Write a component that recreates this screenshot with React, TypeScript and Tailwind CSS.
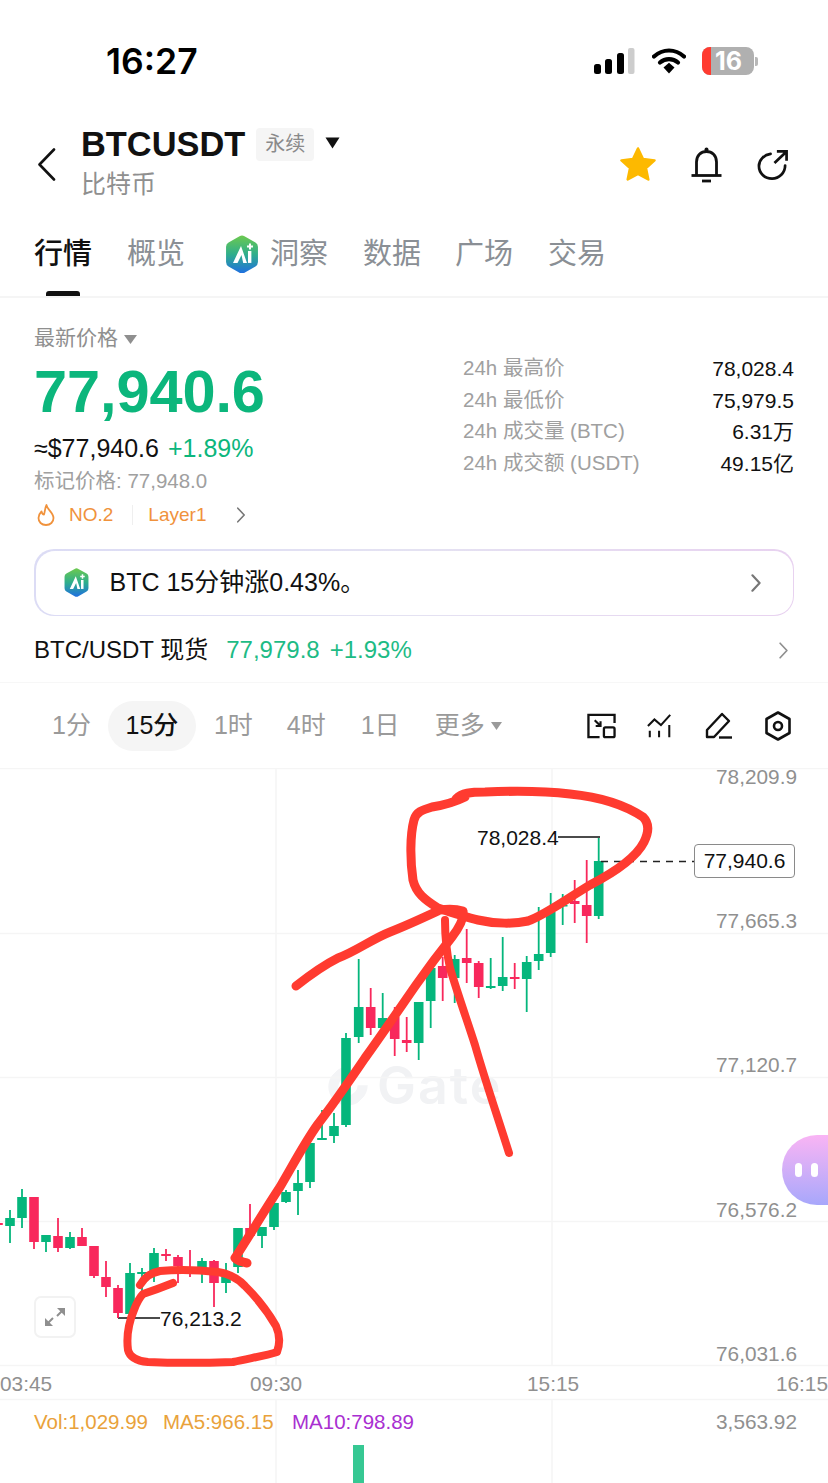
const SANS = "font-['Liberation_Sans','Noto_Sans_CJK_SC',sans-serif]";

// x, wickTop, wickBottom, bodyTop, bodyBottom, green?
const candles: [number, number, number, number, number, 0 | 1][] = [
  [-2, 1222, 1226, 1223, 1225, 0],
  [10, 1210, 1243, 1218, 1226, 1],
  [22, 1189, 1228, 1197, 1218, 1],
  [34, 1197, 1249, 1197, 1242, 0],
  [46, 1235, 1252, 1235, 1242, 1],
  [58, 1218, 1252, 1236, 1248, 0],
  [70, 1232, 1249, 1237, 1248, 1],
  [82, 1228, 1246, 1237, 1246, 0],
  [94, 1246, 1278, 1246, 1276, 0],
  [106, 1261, 1297, 1277, 1287, 0],
  [118, 1285, 1318, 1288, 1313, 0],
  [130, 1263, 1314, 1273, 1314, 1],
  [142, 1268, 1295, 1272, 1274, 1],
  [154, 1248, 1282, 1253, 1271, 1],
  [166, 1249, 1261, 1254, 1256, 0],
  [178, 1255, 1283, 1257, 1266, 0],
  [190, 1250, 1277, 1267, 1270, 0],
  [202, 1258, 1283, 1261, 1269, 1],
  [214, 1260, 1307, 1261, 1283, 0],
  [226, 1263, 1293, 1277, 1283, 1],
  [238, 1228, 1273, 1228, 1267, 1],
  [250, 1204, 1237, 1228, 1236, 0],
  [262, 1227, 1248, 1227, 1236, 1],
  [274, 1202, 1230, 1203, 1227, 1],
  [286, 1190, 1203, 1192, 1202, 1],
  [298, 1170, 1215, 1183, 1191, 1],
  [310, 1143, 1188, 1143, 1182, 1],
  [322, 1110, 1140, 1138, 1140, 1],
  [334, 1113, 1143, 1126, 1136, 1],
  [346, 1033, 1127, 1038, 1125, 1],
  [358.7, 959, 1043, 1007, 1037, 1],
  [370.7, 988, 1035, 1007, 1028, 0],
  [382.7, 993, 1030, 1018, 1028, 1],
  [394.7, 1007, 1056, 1017, 1039, 0],
  [406.7, 1017, 1052, 1040, 1043, 0],
  [418.7, 1002, 1060, 1002, 1043, 1],
  [430.7, 967, 1028, 968, 1001, 1],
  [442.7, 957, 1001, 966, 978, 0],
  [454.7, 955, 1003, 959, 978, 1],
  [466.7, 929, 983, 958, 963, 0],
  [478.7, 961, 998, 963, 987, 0],
  [490.7, 958, 989, 986, 988, 1],
  [502.7, 937, 991, 977, 986, 1],
  [514.7, 963, 989, 977, 979, 0],
  [526.7, 956, 1012, 962, 979, 1],
  [538.7, 907, 970, 954, 961, 1],
  [550.7, 893, 957, 912, 953, 1],
  [562.7, 894, 925, 905, 906, 1],
  [574.7, 880, 923, 901, 904, 0],
  [586.7, 860, 943, 905, 916, 0],
  [598.7, 838, 919, 861, 916, 1],
];

function AiLogo({ size, id }: { size: number; id: string }) {
  return (
    <svg width={size} height={size * 1.08} viewBox="0 0 36 39" className="shrink-0">
      <defs>
        <linearGradient id={id} x1="0" y1="0" x2="0" y2="1">
          <stop offset="0" stopColor="#6cc94f" />
          <stop offset="0.5" stopColor="#2fae8c" />
          <stop offset="1" stopColor="#1f6fe0" />
        </linearGradient>
      </defs>
      <path
        d="M15.5 1.2 a5 5 0 0 1 5 0 L31.5 7.5 a5 5 0 0 1 2.5 4.3 V27.2 a5 5 0 0 1 -2.5 4.3 L20.5 37.8 a5 5 0 0 1 -5 0 L4.5 31.5 a5 5 0 0 1 -2.5 -4.3 V11.8 a5 5 0 0 1 2.5 -4.3 Z"
        fill={`url(#${id})`}
      />
      <path d="M17 11 L9 28 H13.5 L17.5 20 L19.2 28 H23 Z" fill="#fff" />
      <rect x="24" y="16" width="3.4" height="12" fill="#fff" />
      <path d="M26 8.5 v6 M23 11.5 h6" stroke="#fff" strokeWidth="2" />
    </svg>
  );
}

function Chevron({ className, color = "#8f8f8f", w = 2 }: { className: string; color?: string; w?: number }) {
  return (
    <svg viewBox="0 0 12 20" className={className} fill="none">
      <path d="M2 1.5 L10 10 L2 18.5" stroke={color} strokeWidth={w} strokeLinecap="round" strokeLinejoin="round" />
    </svg>
  );
}

function StatusBar() {
  return (
    <div className="h-[125px] flex items-start pt-[40px] pl-[106px] pr-[70px] justify-between">
      <span className="text-[35.5px] leading-[44px] font-semibold text-black font-['Inter',sans-serif]">16:27</span>
      <div className="flex items-center gap-[18px] pt-[7px]">
        <svg width="41" height="26" viewBox="0 0 41 26">
          <rect x="0" y="16" width="7" height="10" rx="2.5" fill="#000" />
          <rect x="11" y="11" width="7" height="15" rx="2.5" fill="#000" />
          <rect x="23" y="5" width="7" height="21" rx="2.5" fill="#000" />
          <rect x="34" y="0" width="6.5" height="26" rx="2" fill="#cdcdcd" />
        </svg>
        <svg width="34" height="26" viewBox="0 0 34 26" className="-ml-[1px]">
          <path d="M2 8.5 C11 0.5 23 0.5 32 8.5" stroke="#000" strokeWidth="4.2" fill="none" strokeLinecap="round" />
          <path d="M8 14.5 C13 10 21 10 26 14.5" stroke="#000" strokeWidth="4.2" fill="none" strokeLinecap="round" />
          <path d="M11.5 19.5 L17 14.8 L22.5 19.5 L17 25.5 Z" fill="#000" />
        </svg>
        <div className="flex items-center -ml-[2px]">
          <div className="w-[52px] h-[28px] rounded-[8px] bg-[#b0b0b0] overflow-hidden flex items-center relative">
            <div className="w-[9px] h-full bg-[#ff3b30]" />
            <span className="flex-1 text-center text-white font-bold text-[25px] leading-[28px] font-['Inter',sans-serif] pr-[8px]">16</span>
          </div>
          <div className="w-[3px] h-[9px] bg-[#b8b8b8] rounded-r-[2px] ml-[1px]" />
        </div>
      </div>
    </div>
  );
}

function Header() {
  return (
    <div className="h-[75px] flex items-center pl-[37px] pr-[40px]">
      <svg width="19" height="33" viewBox="0 0 19 33" fill="none" className="shrink-0 mt-[3px]">
        <path d="M17 1.5 L2.5 16.5 L17 31.5" stroke="#111" strokeWidth="2.6" strokeLinecap="round" strokeLinejoin="round" />
      </svg>
      <div className="ml-[25px] flex flex-col">
        <div className="flex items-center h-[38px]">
          <span className={`${SANS} text-[34.4px] leading-[38px] font-bold text-[#111]`}>BTCUSDT</span>
          <span className={`${SANS} ml-[11px] w-[58px] h-[33px] bg-[#f5f5f5] rounded-[4px] flex items-center justify-center text-[20px] text-[#8a8a8a]`}>永续</span>
          <svg width="15" height="12" viewBox="0 0 15 12" className="ml-[11px] -mt-[2px]"><path d="M0.5 0.5 H14.5 L7.5 11.5 Z" fill="#111" /></svg>
        </div>
        <span className={`${SANS} text-[25px] leading-[32px] mt-[5px] text-[#8f8f8f]`}>比特币</span>
      </div>
      <div className="ml-auto flex items-center gap-[35px] mt-[4px] -mr-[1px]">
        <svg width="36" height="35" viewBox="0 0 36 35">
          <path d="M18 1.5 L23 12 L34.5 13.4 L26 21.2 L28.3 32.5 L18 26.9 L7.7 32.5 L10 21.2 L1.5 13.4 L13 12 Z" fill="#fdb900" stroke="#fdb900" strokeWidth="2.5" strokeLinejoin="round" />
        </svg>
        <svg width="31" height="36" viewBox="0 0 31 36" fill="none">
          <path d="M5.5 28 V15 C5.5 8.5 10 4.5 15.5 4.5 C21 4.5 25.5 8.5 25.5 15 V28" stroke="#111" strokeWidth="2.8" />
          <path d="M0.5 28.5 H30.5" stroke="#111" strokeWidth="2.8" />
          <path d="M11 34 H20" stroke="#111" strokeWidth="2.8" />
          <circle cx="15.5" cy="2.5" r="2" fill="#111" />
        </svg>
        <svg width="32" height="32" viewBox="0 0 33 32" fill="none">
          <path d="M14 4.5 C7 5.5 2 11 2 17 C2 24.5 8 30 15.5 30 C23 30 29 24 29 16.5" stroke="#111" strokeWidth="2.8" strokeLinecap="round" />
          <path d="M18 14 L30 2.5 M20.5 2 H30.5 V11.5" stroke="#111" strokeWidth="2.8" />
        </svg>
      </div>
    </div>
  );
}

function Tabs() {
  const t = "text-[29px] leading-[40px] text-[#8a8f95]";
  return (
    <div className={`${SANS} h-[98px] border-b-2 border-[#f5f5f5] pl-[34px] flex flex-col`}>
      <div className="flex items-center h-[40px] mt-[34px]">
        <span className="text-[29px] leading-[40px] text-[#111] font-medium">行情</span>
        <span className={`${t} ml-[35px]`}>概览</span>
        <div className="ml-[39px]"><AiLogo size={36} id="ai1" /></div>
        <span className={`${t} ml-[10px]`}>洞察</span>
        <span className={`${t} ml-[35px]`}>数据</span>
        <span className={`${t} ml-[34px]`}>广场</span>
        <span className={`${t} ml-[35px]`}>交易</span>
      </div>
      <div className="w-[34px] h-[5px] rounded-t-[3px] bg-[#111] ml-[12px] mt-auto" />
    </div>
  );
}

function Stat({ label, value }: { label: string; value: string }) {
  return (
    <div className="flex justify-between items-center h-[31.5px]">
      <span className="text-[20.5px] text-[#a0a0a0]">{label}</span>
      <span className="text-[21px] text-[#111]">{value}</span>
    </div>
  );
}

function PriceBlock() {
  return (
    <div className={`${SANS} h-[240px] px-[34px] flex justify-between`}>
      <div className="flex flex-col">
        <div className="flex items-center h-[30px] mt-[25px] text-[21px] text-[#8f8f8f]">
          最新价格
          <svg width="13" height="9" viewBox="0 0 13 9" className="ml-[6px] mt-[2px]"><path d="M0 0 H13 L6.5 9 Z" fill="#8f8f8f" /></svg>
        </div>
        <div className="text-[59.5px] leading-[66px] font-bold text-[#0cb67c] mt-[6px] tracking-[-0.1px]">77,940.6</div>
        <div className="flex items-center h-[32px] mt-[8px] text-[25px]">
          <span className="text-[#111]">≈$77,940.6</span>
          <span className="text-[#0cb67c] ml-[9px]">+1.89%</span>
        </div>
        <div className="text-[20.5px] leading-[28px] text-[#a0a0a0] mt-[2px]">标记价格: 77,948.0</div>
        <div className="flex items-center h-[30px] mt-[5px] text-[19px] text-[#f0923c]">
          <svg width="18" height="22" viewBox="0 0 18 22" fill="none" className="ml-[3px]">
            <path d="M9.5 1 C10 5.5 16.5 8.5 16.5 14 C16.5 18 13.5 21 9 21 C4.5 21 1.5 18 1.5 14 C1.5 11 3 9 4.5 7.5 C5 9.5 6 10.5 7 10.5 C8 7.5 8 4 9.5 1 Z" stroke="#f0923c" strokeWidth="1.8" strokeLinejoin="round" />
          </svg>
          <span className="ml-[14px]">NO.2</span>
          <span className="w-[1px] h-[20px] bg-[#efefef] ml-[19px] mr-[15px]" />
          <span>Layer1</span>
          <Chevron className="w-[10px] h-[16px] ml-[30px]" color="#777" />
        </div>
      </div>
      <div className="w-[331px] mt-[55px]">
        <Stat label="24h 最高价" value="78,028.4" />
        <Stat label="24h 最低价" value="75,979.5" />
        <Stat label="24h 成交量 (BTC)" value="6.31万" />
        <Stat label="24h 成交额 (USDT)" value="49.15亿" />
      </div>
    </div>
  );
}

function Insight() {
  return (
    <div className="mx-[34px] mt-[11px] h-[67px] rounded-[20px] p-[1.5px] bg-gradient-to-r from-[#dcdcf5] via-[#e4e2f2] to-[#e8d2f0]">
      <div className={`${SANS} h-full rounded-[19px] bg-white flex items-center pl-[27px] pr-[31px]`}>
        <AiLogo size={27} id="ai2" />
        <span className="ml-[20px] text-[25px] text-[#111]">BTC 15分钟涨0.43%。</span>
        <Chevron className="w-[12px] h-[18px] ml-auto" color="#777" w={2.4} />
      </div>
    </div>
  );
}

function SpotRow() {
  return (
    <div className={`${SANS} h-[67px] border-b-[1.5px] border-[#f7f7f7] pl-[34px] pr-[39px] pt-[2px] flex items-center text-[24px]`}>
      <span className="text-[#111]">BTC/USDT 现货</span>
      <span className="text-[#1dbb85] ml-[18px]">77,979.8</span>
      <span className="text-[#1dbb85] ml-[10px]">+1.93%</span>
      <Chevron className="w-[11px] h-[17px] ml-auto" color="#8f8f8f" />
    </div>
  );
}

function Toolbar() {
  const t = "text-[25px] text-[#9a9a9a]";
  return (
    <div className={`${SANS} h-[85px] flex items-center pl-[52px] pr-[37px]`}>
      <span className={t}>1分</span>
      <span className="ml-[17px] w-[88px] h-[50px] rounded-[25px] bg-[#f5f5f5] flex items-center justify-center text-[25px] text-[#111] font-medium">15分</span>
      <span className={`${t} ml-[18px]`}>1时</span>
      <span className={`${t} ml-[34px]`}>4时</span>
      <span className={`${t} ml-[35px]`}>1日</span>
      <span className={`${t} ml-[35px]`}>更多</span>
      <svg width="11" height="8" viewBox="0 0 11 8" className="ml-[6px]"><path d="M0 0 H11 L5.5 8 Z" fill="#9a9a9a" /></svg>
      <div className="ml-auto flex items-center gap-[32px]">
        <svg width="29" height="26" viewBox="0 0 30 26" fill="none" stroke="#111" strokeWidth="2.4" className="-mr-[1px]">
          <path d="M28.5 10 V1.5 H1.5 V24.5 H13" />
          <path d="M8 7 L14 13 M14 8 V13 H9" strokeWidth="2.2" />
          <rect x="17.5" y="14.5" width="11" height="10" rx="1.5" />
        </svg>
        <svg width="26" height="26" viewBox="0 0 28 26" fill="none" stroke="#111" strokeWidth="2.2">
          <path d="M1 13 L8 6 L15 12 L25 1" />
          <path d="M3 18 V25 M13 18 V25 M24 12 V25" />
        </svg>
        <svg width="28" height="27" viewBox="0 0 28 27" fill="none" stroke="#111" strokeWidth="2.4" strokeLinejoin="round">
          <path d="M2 25 V18 L17 2 L24 9 L9 25 Z" />
          <path d="M14 25.5 H27" />
        </svg>
        <svg width="26" height="30" viewBox="0 0 26 30" fill="none" stroke="#111" strokeWidth="2.6" strokeLinejoin="round">
          <path d="M13 1.5 L24.5 8 V22 L13 28.5 L1.5 22 V8 Z" />
          <circle cx="13" cy="15" r="4" />
        </svg>
      </div>
    </div>
  );
}

function Chart() {
  const ax = `${SANS} absolute text-[20.8px] leading-[26px] text-[#909090]`;
  return (
    <div className="relative h-[715px]">
      <div className="absolute left-[328px] top-[296px] flex items-center gap-[9px]">
        <div className="w-[40px] h-[38px] rounded-full border-[10px] border-[#f3f4f6] border-r-transparent -rotate-45" />
        <span className="font-['Inter',sans-serif] font-semibold text-[52px] leading-[44px] tracking-[2px] text-[#f1f2f4]">Gate</span>
      </div>
      <svg className="absolute inset-0" width="828" height="715" viewBox="0 768 828 715">
        <g stroke="#f5f5f5" strokeWidth="1.5">
          {[768.5, 933.5, 1077.5, 1221.5, 1365.5, 1399.5].map((y) => (
            <line key={y} x1="0" x2="828" y1={y} y2={y} />
          ))}
          {[276, 552].map((x) => (
            <g key={x}>
              <line x1={x} x2={x} y1="768" y2="1365" />
              <line x1={x} x2={x} y1="1399" y2="1483" />
            </g>
          ))}
        </g>
        {candles.map(([x, wt, wb, bt, bb, g]) => {
          const c = g ? "#05b67c" : "#f8285c";
          return (
            <g key={x} fill={c}>
              <rect x={x - 0.9} y={wt} width="1.8" height={wb - wt} />
              <rect x={x - 4.8} y={bt} width="9.6" height={Math.max(bb - bt, 1.5)} />
            </g>
          );
        })}
        <rect x="353" y="1445" width="11" height="38" fill="#36c893" />
        <path d="M118 1318 H160 M558 837 H600" stroke="#111" strokeWidth="1.5" fill="none" />
        <path d="M118 1312 V1318" stroke="#f8285c" strokeWidth="1.8" />
        <path d="M601 861.5 H694" stroke="#222" strokeWidth="1.3" strokeDasharray="7 6" fill="none" />
      </svg>

      <span className={`${ax} right-[31px] top-[-4px]`}>78,209.9</span>
      <span className={`${ax} right-[31px] top-[140px]`}>77,665.3</span>
      <span className={`${ax} right-[31px] top-[284px]`}>77,120.7</span>
      <span className={`${ax} right-[31px] top-[429px]`}>76,576.2</span>
      <span className={`${ax} right-[31px] top-[573px]`}>76,031.6</span>

      <span className={`${ax} left-0 top-[603px]`}>03:45</span>
      <span className={`${ax} left-[250px] top-[603px]`}>09:30</span>
      <span className={`${ax} left-[527px] top-[603px]`}>15:15</span>
      <span className={`${ax} right-0 top-[603px]`}>16:15</span>

      <div className={`${SANS} absolute left-[34px] top-[641px] flex text-[20.5px] leading-[26px]`}>
        <span className="text-[#e9a23b] w-[129px]">Vol:1,029.99</span>
        <span className="text-[#e9a23b] w-[129px]">MA5:966.15</span>
        <span className="text-[#a92fd1]">MA10:798.89</span>
      </div>
      <span className={`${ax} right-[31px] top-[641px]`}>3,563.92</span>

      <span className={`${SANS} absolute left-[477px] top-[57px] text-[21px] leading-[26px] text-[#111]`}>78,028.4</span>
      <span className={`${SANS} absolute left-[160px] top-[538px] text-[21px] leading-[26px] text-[#111]`}>76,213.2</span>
      <div className={`${SANS} absolute left-[694px] top-[76px] w-[101px] h-[34px] bg-white border border-[#8a8a8a] rounded-[4px] flex items-center justify-center text-[21px] text-[#111]`}>77,940.6</div>

      <div className="absolute left-[34px] top-[528px] w-[42px] h-[42px] rounded-[7px] border-2 border-[#f2f2f2] bg-white flex items-center justify-center">
        <svg width="22" height="20" viewBox="0 0 22 20" fill="none" stroke="#8f8f8f" strokeWidth="2">
          <path d="M3 17 L9 11 M19 3 L13 9" />
          <path d="M1 11 V19 H9 Z M21 9 V1 H13 Z" fill="#8f8f8f" stroke="none" />
        </svg>
      </div>

      <svg className="absolute inset-0 pointer-events-none" width="828" height="715" viewBox="0 768 828 715" fill="none" stroke="#ff3b30" strokeLinecap="round" strokeLinejoin="round">
        <path strokeWidth="9" d="M456 799 C462 793 470 792 485 792 C510 791 545 791 570 794 C600 797 625 805 643 817 C649 823 649 832 644 842 C636 858 615 872 590 885 C565 900 545 915 528 921 C515 924 495 924 478 920 C465 917 450 912 438 908 C425 900 416 893 413 880 C410 860 410 835 414 820 C416 812 422 810 432 807 C445 805 455 802 465 797" />
        <path strokeWidth="9" d="M296 986 C310 975 322 966 338 958 C355 952 372 939 390 932 C408 925 425 917 440 910 C448 909 456 909 463 911 C464 918 459 928 452 937 C440 952 428 968 416 985 C400 1008 383 1033 365 1058 C350 1080 335 1102 318 1124 C305 1142 293 1165 280 1187 C266 1208 250 1235 235 1258 C238 1261 242 1262 247 1263" />
        <path strokeWidth="8" d="M445 920 C445 935 446 950 450 968 C458 995 467 1020 475 1045 C485 1080 497 1115 509 1153" />
        <path strokeWidth="8" d="M140 1285 C145 1277 150 1273 160 1271 C180 1269 200 1270 218 1272 C230 1274 238 1278 245 1286 C255 1296 268 1312 276 1326 C280 1335 280 1344 277 1352 C265 1356 250 1358 233 1362 C205 1363 170 1363 148 1362 C137 1361 130 1358 128 1350 C126 1335 129 1322 134 1310 C137 1302 139 1298 143 1294 C152 1291 163 1287 173 1283" />
      </svg>

      <div className="absolute right-0 top-[367px] w-[46px] h-[70px] rounded-l-[35px] bg-gradient-to-b from-[#f9b4f4] to-[#a7a7fb] flex items-center gap-[9px] pl-[13px]">
        <span className="w-[7px] h-[14px] rounded-full bg-white" />
        <span className="w-[7px] h-[14px] rounded-full bg-white" />
      </div>
    </div>
  );
}

export default function App() {
  return (
    <div className="w-[828px] h-[1483px] overflow-hidden bg-white">
      <StatusBar />
      <Header />
      <Tabs />
      <PriceBlock />
      <Insight />
      <SpotRow />
      <Toolbar />
      <Chart />
    </div>
  );
}
